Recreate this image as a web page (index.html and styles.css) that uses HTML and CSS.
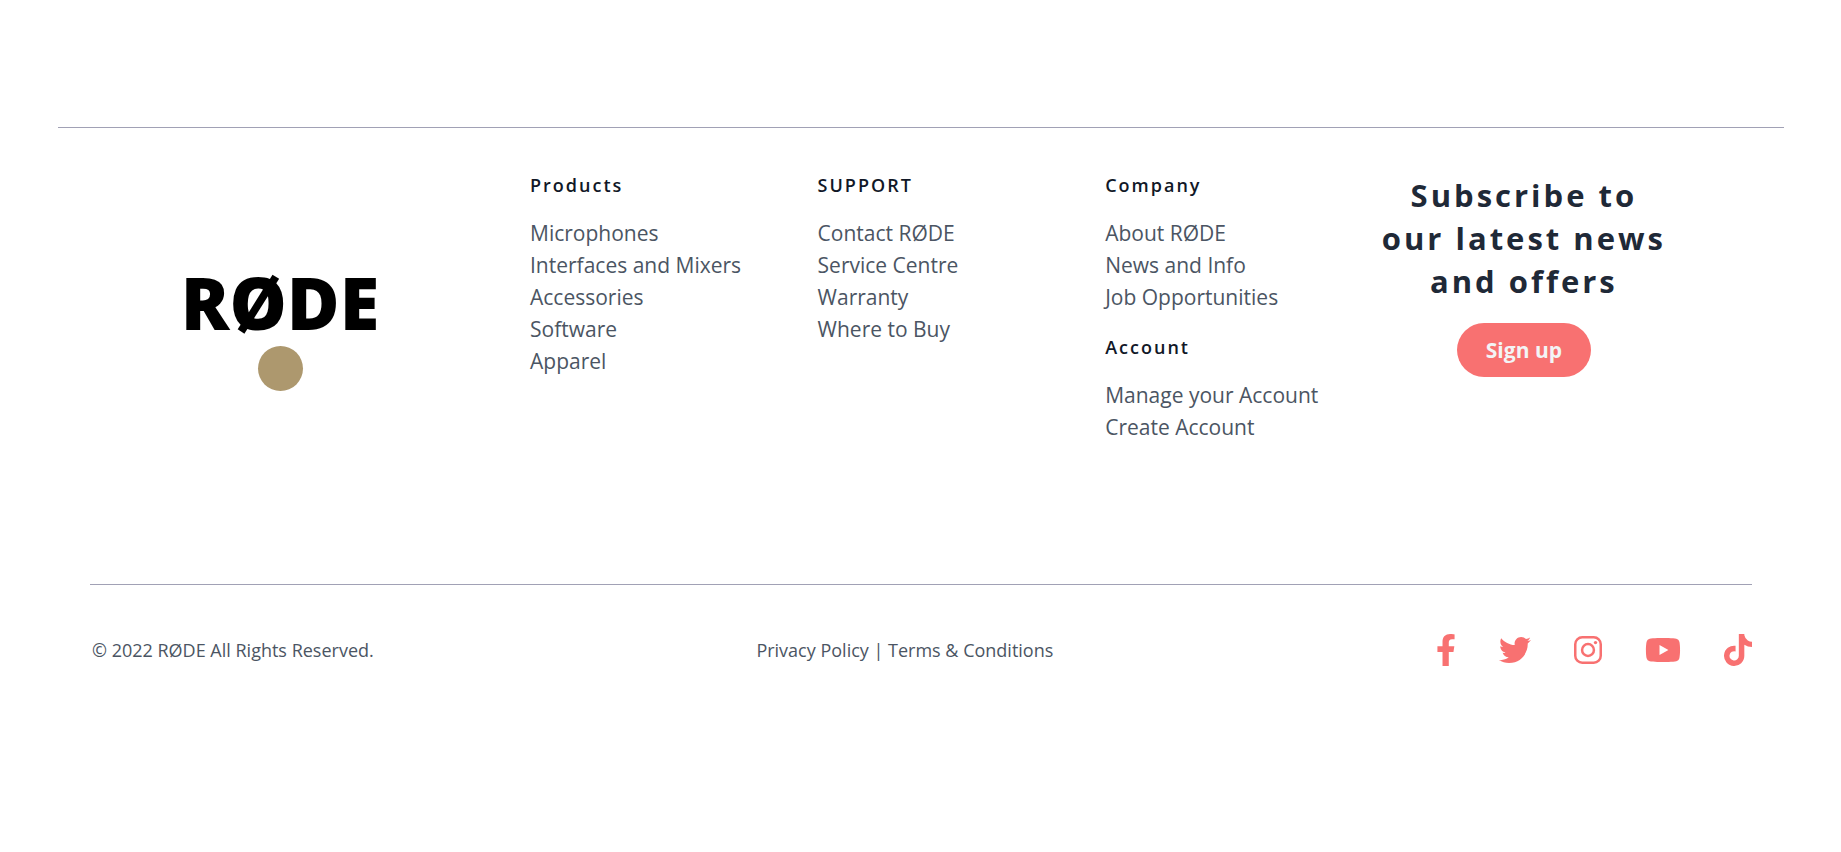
FILE: index.html
```html
<!DOCTYPE html>
<html lang="en">
<head>
<meta charset="utf-8">
<meta name="viewport" content="width=device-width, initial-scale=1">
<title>RØDE</title>
<link rel="stylesheet" href="styles.css">
</head>
<body>
<footer class="footer">
  <div class="footer-main">
    <a class="brand" href="#" aria-label="RØDE home">
      <span class="brand-name">RØDE</span>
      <span class="brand-dot"></span>
    </a>
    <nav class="column" aria-label="Products">
      <h2 class="column-title">Products</h2>
      <ul class="links">
        <li><a href="#">Microphones</a></li>
        <li><a href="#">Interfaces and Mixers</a></li>
        <li><a href="#">Accessories</a></li>
        <li><a href="#">Software</a></li>
        <li><a href="#">Apparel</a></li>
      </ul>
    </nav>
    <nav class="column" aria-label="Support">
      <h2 class="column-title">SUPPORT</h2>
      <ul class="links">
        <li><a href="#">Contact RØDE</a></li>
        <li><a href="#">Service Centre</a></li>
        <li><a href="#">Warranty</a></li>
        <li><a href="#">Where to Buy</a></li>
      </ul>
    </nav>
    <nav class="column" aria-label="Company and account">
      <h2 class="column-title">Company</h2>
      <ul class="links">
        <li><a href="#">About RØDE</a></li>
        <li><a href="#">News and Info</a></li>
        <li><a href="#">Job Opportunities</a></li>
      </ul>
      <h2 class="column-title">Account</h2>
      <ul class="links">
        <li><a href="#">Manage your Account</a></li>
        <li><a href="#">Create Account</a></li>
      </ul>
    </nav>
    <section class="subscribe">
      <h2 class="subscribe-title">Subscribe to<br>our latest news<br>and offers</h2>
      <button class="signup" type="button">Sign up</button>
    </section>
  </div>
  <div class="footer-bottom">
    <p class="copyright">© 2022 RØDE All Rights Reserved.</p>
    <p class="legal"><a href="#">Privacy Policy</a> | <a href="#">Terms &amp; Conditions</a></p>
    <div class="social">
      <a href="#" aria-label="Facebook"><svg class="icon" viewBox="0 0 320 512"><path d="M279.14 288l14.22-92.66h-88.91v-60.13c0-25.35 12.42-50.06 52.24-50.06h40.42V6.26S260.43 0 225.36 0c-73.22 0-121.08 44.38-121.08 124.72v70.62H22.89V288h81.39v224h100.17V288z"/></svg></a>
      <a href="#" aria-label="Twitter"><svg class="icon" viewBox="0 0 512 512"><path d="M459.37 151.716c.325 4.548.325 9.097.325 13.645 0 138.72-105.583 298.558-298.558 298.558-59.452 0-114.68-17.219-161.137-47.106 8.447.974 16.568 1.299 25.34 1.299 49.055 0 94.213-16.568 130.274-44.832-46.132-.975-84.792-31.188-98.112-72.772 6.498.974 12.995 1.624 19.818 1.624 9.421 0 18.843-1.3 27.614-3.573-48.081-9.747-84.143-51.98-84.143-102.985v-1.299c13.969 7.797 30.214 12.67 47.431 13.319-28.264-18.843-46.781-51.005-46.781-87.391 0-19.492 5.197-37.36 14.294-52.954 51.655 63.675 129.3 105.258 216.365 109.807-1.624-7.797-2.599-15.918-2.599-24.04 0-57.828 46.782-104.934 104.934-104.934 30.213 0 57.502 12.67 76.67 33.137 23.715-4.548 46.456-13.32 66.599-25.34-7.798 24.366-24.366 44.833-46.132 57.827 21.117-2.273 41.584-8.122 60.426-16.243-14.292 20.791-32.161 39.308-52.628 54.253z"/></svg></a>
      <a href="#" aria-label="Instagram"><svg class="icon" viewBox="0 0 448 512"><g fill="none" stroke="currentColor" stroke-width="40"><rect x="20" y="52" width="408" height="408" rx="112"/><circle cx="224" cy="256" r="95"/></g><circle cx="344" cy="137" r="27"/></svg></a>
      <a href="#" aria-label="YouTube"><svg class="icon" viewBox="0 0 576 512"><path d="M549.655 124.083c-6.281-23.65-24.787-42.276-48.284-48.597C458.781 64 288 64 288 64S117.22 64 74.629 75.486c-23.497 6.322-42.003 24.947-48.284 48.597-11.412 42.867-11.412 132.305-11.412 132.305s0 89.438 11.412 132.305c6.281 23.65 24.787 41.5 48.284 47.821C117.22 448 288 448 288 448s170.78 0 213.371-11.486c23.497-6.321 42.003-24.171 48.284-47.821 11.412-42.867 11.412-132.305 11.412-132.305s0-89.438-11.412-132.305zM232.145 337.591V175.185l142.739 81.205z"/></svg></a>
      <a href="#" aria-label="TikTok"><svg class="icon" viewBox="0 0 448 512"><path d="M448 209.91a210.06 210.06 0 0 1-122.77-39.25v178.72A162.55 162.55 0 1 1 185 188.31v89.89a74.62 74.62 0 1 0 52.23 71.18V0h88a121.18 121.18 0 0 0 1.86 22.17A122.18 122.18 0 0 0 381 102.39a121.43 121.43 0 0 0 67 20.14z"/></svg></a>
    </div>
  </div>
</footer>
</body>
</html>
```

FILE: styles.css
```css
* {
  box-sizing: border-box;
}

body {
  margin: 0;
  background: #fff;
  color: #4b5563;
  font-family: "Segoe UI", "Open Sans", "Noto Sans", sans-serif;
}

h2,
p,
ul {
  margin: 0;
  padding: 0;
}

a {
  color: inherit;
  text-decoration: none;
}

.footer {
  margin: 127px 57px 0 58px;
  border-top: 1px solid #a1a1b5;
}

.footer-main {
  display: grid;
  grid-template-columns: 456px repeat(4, 1fr);
  padding: 40px 118px 0 0;
  min-height: 456px;
}

.brand {
  display: flex;
  flex-direction: column;
  align-items: center;
  padding: 96px 12px 0 0;
}

.brand-name {
  color: #000;
  font-family: "Open Sans", sans-serif;
  font-size: 72px;
  font-weight: 800;
  line-height: 76px;
}

.brand-dot {
  width: 45px;
  height: 45px;
  margin-top: 6px;
  border-radius: 50%;
  background: #ad986e;
}

.column {
  padding: 3px 0 0 16px;
}

.column-title {
  margin-bottom: 18px;
  color: #111827;
  font-size: 18px;
  font-weight: 600;
  line-height: 28px;
  letter-spacing: 2px;
}

.links {
  margin-bottom: 20px;
  font-size: 21px;
  line-height: 32px;
  list-style: none;
  white-space: nowrap;
}

.subscribe {
  display: flex;
  flex-direction: column;
  align-items: center;
  padding: 6px 0 0 5px;
}

.subscribe-title {
  color: #1f2937;
  font-size: 31px;
  font-weight: 700;
  line-height: 43px;
  letter-spacing: 3px;
  text-align: center;
  white-space: nowrap;
}

.signup {
  margin-top: 20px;
  padding: 0 29px;
  border: 0;
  border-radius: 27px;
  background: #f87171;
  color: #f3f4f6;
  font: 700 21px/54px "Segoe UI", "Open Sans", "Noto Sans", sans-serif;
}

.footer-bottom {
  display: flex;
  align-items: center;
  justify-content: space-between;
  margin: 0 32px;
  padding: 49px 0 0 2px;
  border-top: 1px solid #a1a1b5;
  font-size: 18px;
  line-height: 32px;
}

.social {
  display: flex;
  gap: 43px;
  color: #f87171;
}

.social a {
  display: flex;
}

.icon {
  height: 32px;
  fill: currentColor;
}
```
